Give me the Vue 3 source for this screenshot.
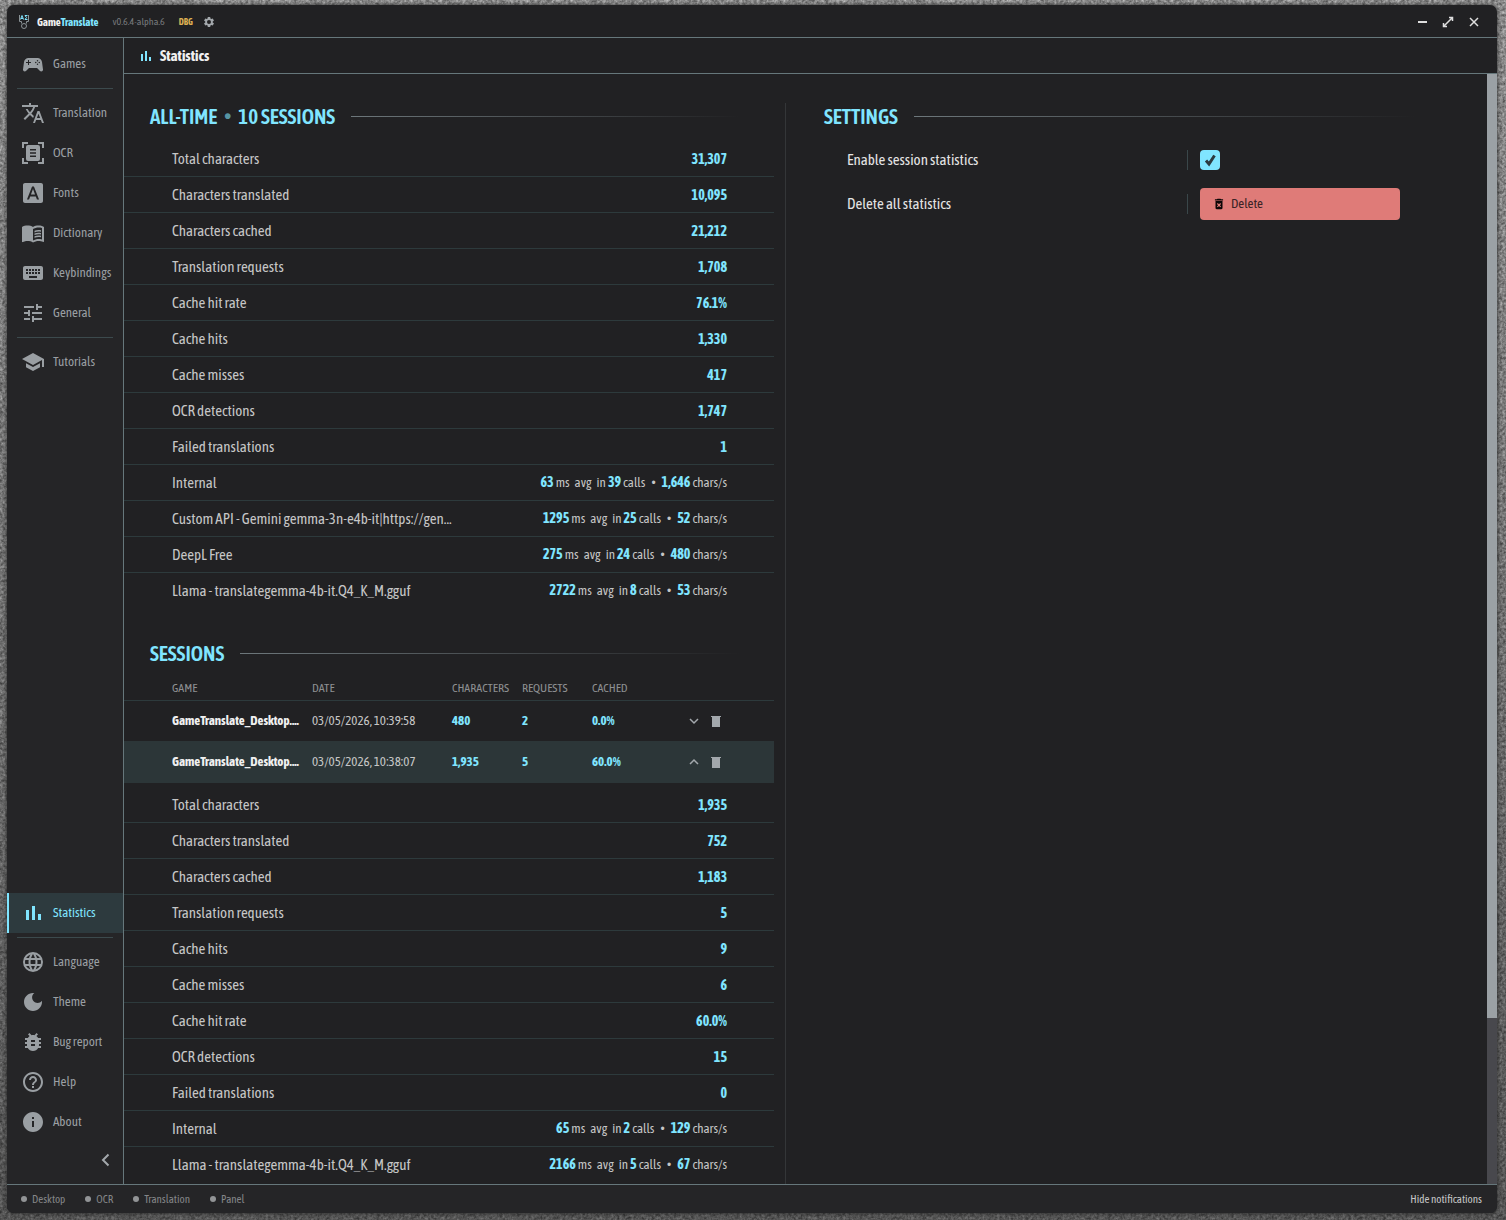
<script setup>
import { ref } from 'vue'

const icons = {
  games: 'M7.97 16 5 19c-.33.3-.77.5-1.25.5A1.75 1.75 0 0 1 2 17.75v-.25l1-7.38C3.21 7.81 5.14 6 7.5 6h9c2.36 0 4.29 1.81 4.5 4.12l1 7.38v.25a1.75 1.75 0 0 1-1.75 1.75c-.48 0-.92-.2-1.25-.5l-2.97-3H7.97M7 8v2H5v1h2v2h1v-2h2v-1H8V8H7m9.5 0a.75.75 0 1 0 0 1.5.75.75 0 0 0 0-1.5m-1.75 1.75a.75.75 0 1 0 0 1.5.75.75 0 0 0 0-1.5m3.5 0a.75.75 0 1 0 0 1.5.75.75 0 0 0 0-1.5M16.5 11.5a.75.75 0 1 0 0 1.5.75.75 0 0 0 0-1.5z',
  translation: 'M12.87 15.07l-2.54-2.51.03-.03C12.1 10.59 13.34 8.36 14.07 6H17V4h-7V2H8v2H1v2h11.17C11.5 7.92 10.44 9.75 9 11.35 8.07 10.32 7.3 9.19 6.69 8h-2c.73 1.63 1.73 3.17 2.98 4.56L2.58 17.58 4 19l5-5 3.11 3.11.76-2.04M18.5 10h-2L12 22h2l1.12-3h4.75L21 22h2l-4.5-12m-2.62 7 1.62-4.33L19.12 17h-3.24z',
  ocr: 'M1 1h6v2H3v4H1V1zm16 0h6v6h-2V3h-4V1zM1 17h2v4h4v2H1v-6zm20 0h2v6h-6v-2h4v-4zM7 4h10a2 2 0 0 1 2 2v12a2 2 0 0 1-2 2H7a2 2 0 0 1-2-2V6a2 2 0 0 1 2-2zm2 4v1.5h6V8H9zm0 3.25v1.5h6v-1.5H9zm0 3.25V16h6v-1.5H9z',
  fonts: 'M9.93 13.5h4.14L12 7.98zM20 2H4c-1.1 0-2 .9-2 2v16c0 1.1.9 2 2 2h16c1.1 0 2-.9 2-2V4c0-1.1-.9-2-2-2zm-4.05 16.5-1.14-3H9.17l-1.12 3H5.96l5.11-13h1.86l5.11 13h-2.09z',
  dictionary: 'M21 5c-1.11-.35-2.33-.5-3.5-.5-1.95 0-4.05.4-5.5 1.5-1.45-1.1-3.55-1.5-5.5-1.5S2.45 4.9 1 6v14.65c0 .25.25.5.5.5.1 0 .15-.05.25-.05C3.1 20.45 5.05 20 6.5 20c1.95 0 4.05.4 5.5 1.5 1.35-.85 3.8-1.5 5.5-1.5 1.65 0 3.35.3 4.75 1.05.1.05.15.05.25.05.25 0 .5-.25.5-.5V6c-.6-.45-1.25-.75-2-1zm0 13.5c-1.1-.35-2.3-.5-3.5-.5-1.7 0-4.15.65-5.5 1.5V8c1.35-.85 3.8-1.5 5.5-1.5 1.2 0 2.4.15 3.5.5v11.5zM13.5 9.8c1.8-.8 4.2-1 6.5-.5v1.5c-2.3-.5-4.7-.2-6.5.6zm0 2.7c1.8-.8 4.2-1 6.5-.5v1.5c-2.3-.5-4.7-.2-6.5.6zm0 2.7c1.8-.8 4.2-1 6.5-.5v1.5c-2.3-.5-4.7-.2-6.5.6z',
  keybindings: 'M20 5H4c-1.1 0-2 .9-2 2v10c0 1.1.9 2 2 2h16c1.1 0 2-.9 2-2V7c0-1.1-.9-2-2-2zm-9 3h2v2h-2V8zm0 3h2v2h-2v-2zM8 8h2v2H8V8zm0 3h2v2H8v-2zm-1 2H5v-2h2v2zm0-3H5V8h2v2zm9 7H8v-2h8v2zm0-4h-2v-2h2v2zm0-3h-2V8h2v2zm3 3h-2v-2h2v2zm0-3h-2V8h2v2z',
  general: 'M3 17v2h6v-2H3zM3 5v2h10V5H3zm10 16v-2h8v-2h-8v-2h-2v6h2zM7 9v2H3v2h4v2h2V9H7zm14 4v-2H11v2h10zm-6-4h2V7h4V5h-4V3h-2v6z',
  tutorials: 'M5 13.18v4L12 21l7-3.82v-4L12 17l-7-3.82zM12 3 1 9l11 6 9-4.91V17h2V9L12 3z',
  statistics: 'M5 9h3v10H5zM11 5h3v14h-3zM17 13h3v6h-3z',
  language: 'M12 2a10 10 0 1 0 0 20 10 10 0 0 0 0-20zm6.93 6h-2.95a15.65 15.65 0 0 0-1.38-3.56A8.03 8.03 0 0 1 18.93 8zM12 4.04c.83 1.2 1.48 2.53 1.91 3.96h-3.82c.43-1.43 1.08-2.76 1.91-3.96zM4.26 14a8.2 8.2 0 0 1 0-4h3.38a16.5 16.5 0 0 0 0 4H4.26zm.82 2h2.95c.32 1.25.78 2.45 1.38 3.56A7.99 7.99 0 0 1 5.08 16zm2.95-8H5.08a7.99 7.99 0 0 1 4.33-3.56A15.65 15.65 0 0 0 8.03 8zM12 19.96A14 14 0 0 1 10.09 16h3.82A14 14 0 0 1 12 19.96zM14.34 14H9.66a14.7 14.7 0 0 1 0-4h4.68a14.6 14.6 0 0 1 0 4zm.25 5.56c.6-1.11 1.06-2.31 1.38-3.56h2.95a8.03 8.03 0 0 1-4.33 3.56zM16.36 14a16.5 16.5 0 0 0 0-4h3.38a8.2 8.2 0 0 1 0 4h-3.38z',
  theme: 'M12 3c-4.97 0-9 4.03-9 9s4.03 9 9 9 9-4.03 9-9c0-.46-.04-.92-.1-1.36-.98 1.37-2.58 2.26-4.4 2.26-2.98 0-5.4-2.42-5.4-5.4 0-1.81.89-3.42 2.26-4.4C12.92 3.04 12.46 3 12 3z',
  bug: 'M20 8h-2.81c-.45-.78-1.07-1.45-1.82-1.96L17 4.41 15.59 3l-2.17 2.17C12.96 5.06 12.49 5 12 5s-.96.06-1.41.17L8.41 3 7 4.41l1.62 1.63C7.88 6.55 7.26 7.22 6.81 8H4v2h2.09c-.05.33-.09.66-.09 1v1H4v2h2v1c0 .34.04.67.09 1H4v2h2.81c1.04 1.79 2.97 3 5.19 3s4.15-1.21 5.19-3H20v-2h-2.09c.05-.33.09-.66.09-1v-1h2v-2h-2v-1c0-.34-.04-.67-.09-1H20V8zm-6 8h-4v-2h4v2zm0-4h-4v-2h4v2z',
  help: 'M11 18h2v-2h-2v2zm1-16C6.48 2 2 6.48 2 12s4.48 10 10 10 10-4.48 10-10S17.52 2 12 2zm0 18c-4.41 0-8-3.59-8-8s3.59-8 8-8 8 3.59 8 8-3.59 8-8 8zm0-14c-2.21 0-4 1.79-4 4h2c0-1.1.9-2 2-2s2 .9 2 2c0 2-3 1.75-3 5h2c0-2.25 3-2.5 3-5 0-2.21-1.79-4-4-4z',
  about: 'M12 2C6.48 2 2 6.48 2 12s4.48 10 10 10 10-4.48 10-10S17.52 2 12 2zm1 15h-2v-6h2v6zm0-8h-2V7h2v2z',
  gear: 'M19.43 12.98c.04-.32.07-.64.07-.98s-.03-.66-.07-.98l2.11-1.65c.19-.15.24-.42.12-.64l-2-3.46c-.12-.22-.39-.3-.61-.22l-2.49 1c-.52-.4-1.08-.73-1.69-.98l-.38-2.65C14.46 2.18 14.25 2 14 2h-4c-.25 0-.46.18-.49.42l-.38 2.65c-.61.25-1.17.59-1.69.98l-2.49-1c-.23-.09-.49 0-.61.22l-2 3.46c-.13.22-.07.49.12.64l2.11 1.65c-.04.32-.07.65-.07.98s.03.66.07.98l-2.11 1.65c-.19.15-.24.42-.12.64l2 3.46c.12.22.39.3.61.22l2.49-1c.52.4 1.08.73 1.69.98l.38 2.65c.03.24.24.42.49.42h4c.25 0 .46-.18.49-.42l.38-2.65c.61-.25 1.17-.59 1.69-.98l2.49 1c.23.09.49 0 .61-.22l2-3.46c.12-.22.07-.49-.12-.64l-2.11-1.65zM12 16a4 4 0 1 1 0-8 4 4 0 0 1 0 8z',
  deleteForever: 'M6 19c0 1.1.9 2 2 2h8c1.1 0 2-.9 2-2V7H6v12zm2.46-7.12 1.41-1.41L12 12.59l2.12-2.12 1.41 1.41L13.41 14l2.12 2.12-1.41 1.41L12 15.41l-2.12 2.12-1.41-1.41L10.59 14l-2.13-2.12zM15.5 4l-1-1h-5l-1 1H5v2h14V4z'
}

const navGroups = [
  [{ id: 'games', label: 'Games' }],
  [
    { id: 'translation', label: 'Translation' },
    { id: 'ocr', label: 'OCR' },
    { id: 'fonts', label: 'Fonts' },
    { id: 'dictionary', label: 'Dictionary' },
    { id: 'keybindings', label: 'Keybindings' },
    { id: 'general', label: 'General' }
  ],
  [{ id: 'tutorials', label: 'Tutorials' }],
  [{ id: 'statistics', label: 'Statistics' }],
  [
    { id: 'language', label: 'Language' },
    { id: 'theme', label: 'Theme' },
    { id: 'bug', label: 'Bug report' },
    { id: 'help', label: 'Help' },
    { id: 'about', label: 'About' }
  ]
]

const allTime = [
  { label: 'Total characters', value: '31,307' },
  { label: 'Characters translated', value: '10,095' },
  { label: 'Characters cached', value: '21,212' },
  { label: 'Translation requests', value: '1,708' },
  { label: 'Cache hit rate', value: '76.1%' },
  { label: 'Cache hits', value: '1,330' },
  { label: 'Cache misses', value: '417' },
  { label: 'OCR detections', value: '1,747' },
  { label: 'Failed translations', value: '1' },
  { label: 'Internal', ms: '63', calls: '39', speed: '1,646' },
  { label: 'Custom API - Gemini gemma-3n-e4b-it|https://gen...', ms: '1295', calls: '25', speed: '52' },
  { label: 'DeepL Free', ms: '275', calls: '24', speed: '480' },
  { label: 'Llama - translategemma-4b-it.Q4_K_M.gguf', ms: '2722', calls: '8', speed: '53' }
]

const sessionDetail = [
  { label: 'Total characters', value: '1,935' },
  { label: 'Characters translated', value: '752' },
  { label: 'Characters cached', value: '1,183' },
  { label: 'Translation requests', value: '5' },
  { label: 'Cache hits', value: '9' },
  { label: 'Cache misses', value: '6' },
  { label: 'Cache hit rate', value: '60.0%' },
  { label: 'OCR detections', value: '15' },
  { label: 'Failed translations', value: '0' },
  { label: 'Internal', ms: '65', calls: '2', speed: '129' },
  { label: 'Llama - translategemma-4b-it.Q4_K_M.gguf', ms: '2166', calls: '5', speed: '67' }
]

const sessions = [
  { game: 'GameTranslate_Desktop....', date: '03/05/2026, 10:39:58', chars: '480', requests: '2', cached: '0.0%' },
  { game: 'GameTranslate_Desktop....', date: '03/05/2026, 10:38:07', chars: '1,935', requests: '5', cached: '60.0%' }
]

const blocks = [
  { id: 'all', rows: allTime },
  { id: 'detail', rows: sessionDetail }
]

const statuses = ['Desktop', 'OCR', 'Translation', 'Panel']
const enabled = ref(true)
</script>

<template>
  <div class="desktop">
    <svg class="texture" aria-hidden="true">
      <filter id="grain" x="0" y="0" width="100%" height="100%" color-interpolation-filters="sRGB">
        <feTurbulence type="fractalNoise" baseFrequency="0.35" numOctaves="4" seed="4" />
        <feColorMatrix values="0.6 0 0 0 0.25  0.6 0 0 0 0.25  0.6 0 0 0 0.25  0 0 0 0 1" />
      </filter>
      <rect width="100%" height="100%" filter="url(#grain)" />
    </svg>

    <div class="window">
      <header class="titlebar">
        <svg class="logo" viewBox="0 0 12 16" aria-hidden="true">
          <path class="logo-frame" d="M1.500 1v6.500h2M10.500 1v6.500h-2M3.500 7.500v2M8.500 7.500v2" />
          <path class="logo-mark" d="M2.500 5.500 4 1.500l1.500 4M3 4.500h2M9.500 1.500H7L8.500 3.500 7 5.500h2.500" />
          <circle class="logo-frame" cx="6" cy="12" r="2.500" />
        </svg>
        <strong class="brand">Game<span>Translate</span></strong>
        <span class="version">v0.6.4-alpha.6</span>
        <span class="debug">DBG</span>
        <button class="icon-button" aria-label="Settings">
          <svg class="icon-12" viewBox="0 0 24 24"><path fill-rule="evenodd" :d="icons.gear" /></svg>
        </button>
        <div class="window-controls">
          <button class="icon-button" aria-label="Minimize">
            <svg class="icon-12" viewBox="0 0 12 12"><path d="M2 5h9v2H2z" /></svg>
          </button>
          <button class="icon-button" aria-label="Maximize">
            <svg class="icon-12 thin" viewBox="0 0 12 12"><path d="M1.500 10.500l9-9M7 1.500h3.500V5M1.500 7v3.500H5" /></svg>
          </button>
          <button class="icon-button" aria-label="Close">
            <svg class="icon-12 thin" viewBox="0 0 12 12"><path d="M2 2l8 8M10 2l-8 8" /></svg>
          </button>
        </div>
      </header>

      <div class="body">
        <nav class="sidebar">
          <div
            v-for="(group, i) in navGroups"
            :key="i"
            class="nav-group"
            :class="{ pushed: i === 3 }"
          >
            <a
              v-for="item in group"
              :key="item.id"
              class="nav-item"
              :class="{ active: item.id === 'statistics' }"
              :href="'#' + item.id"
            >
              <svg class="nav-icon" viewBox="0 0 24 24" aria-hidden="true">
                <path fill-rule="evenodd" :d="icons[item.id]" />
              </svg>
              <span>{{ item.label }}</span>
            </a>
          </div>
          <button class="icon-button collapse" aria-label="Collapse sidebar">
            <svg viewBox="0 0 16 16"><path d="M11.500 2.500 6 8l5.500 5.500" /></svg>
          </button>
        </nav>

        <div class="page">
          <div class="page-header">
            <svg class="icon-14" viewBox="0 0 14 14" aria-hidden="true"><path d="M2 5h2v7H2zM6 2h2v10H6zM10 8h2v4h-2z" /></svg>
            <h1>Statistics</h1>
          </div>

          <div class="page-view">
            <main class="content">
              <div class="column stats">
                <section v-for="block in blocks" :key="block.id" class="block">
                  <h2 v-if="block.id === 'all'">ALL-TIME <i>•</i> 10 SESSIONS</h2>
                  <h2 v-else>SESSIONS</h2>

                  <table v-if="block.id === 'detail'" class="sessions">
                    <colgroup>
                      <col class="col-game" /><col class="col-date" /><col class="col-number" />
                      <col class="col-number" /><col class="col-number" /><col />
                    </colgroup>
                    <thead>
                      <tr>
                        <th>GAME</th><th>DATE</th><th>CHARACTERS</th><th>REQUESTS</th><th>CACHED</th><th></th>
                      </tr>
                    </thead>
                    <tbody>
                      <tr v-for="(s, i) in sessions" :key="s.date" :class="{ open: i === 1 }">
                        <td class="game">{{ s.game }}</td>
                        <td>{{ s.date }}</td>
                        <td><b>{{ s.chars }}</b></td>
                        <td><b>{{ s.requests }}</b></td>
                        <td><b>{{ s.cached }}</b></td>
                        <td>
                          <div class="row-actions">
                            <button class="icon-button" :aria-label="i === 1 ? 'Collapse' : 'Expand'">
                              <svg class="icon-12 thin" viewBox="0 0 12 12">
                                <path :d="i === 1 ? 'M2 8l4-4 4 4' : 'M2 4l4 4 4-4'" />
                              </svg>
                            </button>
                            <button class="icon-button" aria-label="Delete session">
                              <svg class="icon-14" viewBox="0 0 14 14"><path d="M2 2h10v1H2zM3 3h8v10H3z" /></svg>
                            </button>
                          </div>
                        </td>
                      </tr>
                    </tbody>
                  </table>

                  <table class="figures">
                    <tbody>
                      <tr v-for="row in block.rows" :key="row.label">
                        <th scope="row">{{ row.label }}</th>
                        <td v-if="row.value"><b>{{ row.value }}</b></td>
                        <td v-else>
                          <div class="rate">
                            <b>{{ row.ms }}</b><span>ms</span><span class="word">avg</span><span class="word">in</span>
                            <b>{{ row.calls }}</b><span>calls</span><i>•</i>
                            <b>{{ row.speed }}</b><span>chars/s</span>
                          </div>
                        </td>
                      </tr>
                    </tbody>
                  </table>
                </section>
              </div>

              <section class="column settings">
                <h2>SETTINGS</h2>
                <div class="setting">
                  <label for="enable-stats">Enable session statistics</label>
                  <div class="control">
                    <input id="enable-stats" v-model="enabled" type="checkbox" />
                    <svg class="tick" viewBox="0 0 20 20" aria-hidden="true"><path d="M6 10.500l3 3.500 5.500-8.500" /></svg>
                  </div>
                </div>
                <div class="setting">
                  <span>Delete all statistics</span>
                  <div class="control">
                    <button class="delete">
                      <svg class="icon-14" viewBox="0 0 24 24" aria-hidden="true"><path fill-rule="evenodd" :d="icons.deleteForever" /></svg>
                      Delete
                    </button>
                  </div>
                </div>
              </section>
            </main>
            <div class="scroll-track"><div class="scroll-thumb"></div></div>
          </div>
        </div>
      </div>

      <footer class="statusbar">
        <span v-for="s in statuses" :key="s" class="status">{{ s }}</span>
        <button class="text-button">Hide notifications</button>
      </footer>
    </div>
  </div>
</template>

<style>
html,
body {
  margin: 0;
  background: #6c6c6c;
}
</style>

<style scoped>
.desktop {
  --accent: #80e5ff;
  --rule: #66777b;
  --faint: #2d3a3c;
  --muted: #9a9fa3;
  position: relative;
  box-sizing: border-box;
  height: 100vh;
  padding: 5px 9px 7px 7px;
  overflow: hidden;
  color: #c6c6c6;
  font-family: "Asap Condensed", "Liberation Sans Narrow", "Open Sans Condensed", "Roboto Condensed", "Liberation Sans", sans-serif;
  font-size: 15px;
  line-height: 20px;
}

.texture {
  position: absolute;
  inset: 0;
  width: 100%;
  height: 100%;
}

.desktop::before {
  content: "";
  position: absolute;
  inset: 0;
  z-index: 1;
  background: linear-gradient(rgba(0, 0, 0, 0), rgba(0, 0, 0, 0.4));
}

.window {
  position: relative;
  z-index: 2;
  display: flex;
  flex-direction: column;
  height: 100%;
  overflow: hidden;
  border-radius: 7px;
  background: #212123;
  box-shadow: 0 0 4px #222;
}

svg {
  display: block;
  flex: none;
  fill: currentColor;
}

button {
  font: inherit;
  color: inherit;
}

.icon-button {
  display: flex;
  padding: 0;
  border: 0;
  background: none;
  color: #a3a8ac;
}

.icon-12 {
  width: 12px;
  height: 12px;
}

.icon-14 {
  width: 14px;
  height: 14px;
}

.thin {
  fill: none;
  stroke: currentColor;
  stroke-width: 1.5;
}

.titlebar {
  display: flex;
  flex: none;
  align-items: center;
  height: 31px;
  padding: 1px 17px 0 11px;
  border-bottom: 1px solid var(--rule);
  font-size: 11px;
}

.logo {
  width: 12px;
  height: 16px;
  margin-right: 7px;
  fill: none;
}

.logo-frame {
  fill: none;
  stroke: #8b9396;
}

.logo-mark {
  stroke: var(--accent);
}

.brand {
  color: #f0f0f0;
}

.brand span {
  color: var(--accent);
}

.version {
  margin-left: 14px;
  color: #77797b;
  font-size: 10px;
}

.debug {
  margin: 0 10px 0 14px;
  color: #dcb054;
  font-size: 9px;
  font-weight: bold;
}

.window-controls {
  display: flex;
  gap: 14px;
  margin-left: auto;
}

.window-controls .icon-button {
  color: #dedede;
}

.body {
  display: flex;
  flex: 1;
  min-height: 0;
}

.sidebar {
  display: flex;
  flex: none;
  flex-direction: column;
  width: 116px;
  padding-top: 6px;
  border-right: 1px solid var(--rule);
  background: #252527;
}

.nav-group + .nav-group::before {
  content: "";
  display: block;
  height: 1px;
  margin: 4px 10px;
  background: #3c4a4d;
}

.nav-group.pushed {
  margin-top: auto;
}

.nav-group.pushed::before {
  display: none;
}

.nav-item {
  display: flex;
  gap: 8px;
  align-items: center;
  height: 40px;
  padding-left: 14px;
  color: var(--muted);
  font-size: 13px;
  text-decoration: none;
  white-space: nowrap;
}

.nav-item.active {
  background: #2d3a3e;
  box-shadow: inset 2px 0 var(--accent);
  color: var(--accent);
}

.nav-icon {
  width: 24px;
  height: 24px;
}

.collapse {
  align-self: flex-end;
  align-items: center;
  height: 36px;
  margin: 0 10px 6px 0;
}

.collapse svg {
  width: 16px;
  height: 16px;
  fill: none;
  stroke: currentColor;
  stroke-width: 2;
}

.page {
  display: flex;
  flex: 1;
  flex-direction: column;
  min-width: 0;
}

.page-header {
  display: flex;
  flex: none;
  gap: 7px;
  align-items: center;
  height: 35px;
  padding-left: 15px;
  border-bottom: 1px solid var(--rule);
}

.page-header svg {
  color: var(--accent);
}

h1 {
  margin: 0;
  color: #f0f0f0;
  font-size: 15px;
}

.page-view {
  display: flex;
  flex: 1;
  min-height: 0;
}

.content {
  display: grid;
  flex: 1;
  grid-template-columns: 662fr 701fr;
  align-items: stretch;
  min-width: 0;
  padding-top: 29px;
  overflow-y: auto;
  scrollbar-width: none;
}

.column {
  min-width: 0;
}

.stats {
  padding: 0 11px 120px 0;
  border-right: 1px solid #343638;
}

h2 {
  display: flex;
  gap: 7px;
  align-items: center;
  height: 26px;
  margin: 0;
  color: var(--accent);
  font-size: 21px;
  font-weight: 600;
  white-space: nowrap;
}

i {
  font-family: "Liberation Sans", sans-serif;
  font-style: normal;
}

h2 i {
  color: #5795a3;
  font-size: 20px;
}

h2::after {
  content: "";
  flex: 1;
  height: 1px;
  margin-left: 9px;
  background: linear-gradient(90deg, #6d777b, transparent);
}

.stats h2 {
  margin: 0 34px 0 26px;
}

.block {
  margin-bottom: 31px;
}

table {
  width: 100%;
  border-collapse: separate;
  border-spacing: 0;
}

th,
td {
  padding: 0;
  text-align: left;
  white-space: nowrap;
}

th {
  font-weight: normal;
}

b {
  color: var(--accent);
}

.figures {
  margin-top: 12px;
}

.sessions + .figures {
  margin-top: 4px;
}

.figures th,
.figures td {
  height: 35px;
  border-bottom: 1px solid var(--faint);
}

.figures tr:last-child > * {
  border-color: transparent;
}

.figures th {
  padding-left: 48px;
}

.figures td {
  padding-right: 47px;
  font-size: 14px;
  text-align: right;
}

.rate {
  display: flex;
  gap: 2px;
  align-items: baseline;
  justify-content: flex-end;
}

.rate span {
  font-size: 13px;
}

.rate .word {
  margin-left: 3px;
}

.rate i {
  margin: 0 4px;
  font-size: 12px;
}

.sessions {
  margin-top: 10px;
  table-layout: fixed;
  font-size: 13px;
}

.sessions th,
.sessions td {
  height: 40px;
  border-bottom: 1px solid transparent;
}

.sessions thead th {
  height: 24px;
  border-color: var(--faint);
  color: #8d8f91;
  font-size: 12px;
}

.sessions th:first-child,
.sessions td:first-child {
  padding-left: 48px;
}

.sessions .game {
  color: #f0f0f0;
  font-weight: bold;
}

.sessions tr:has(+ .open) td {
  border-color: #2c3638;
}

.sessions .open td {
  border-color: #2c3638;
  background: #2c3638;
}

.col-game {
  width: 188px;
}

.col-date {
  width: 140px;
}

.col-number {
  width: 70px;
}

.row-actions {
  display: flex;
  gap: 9px;
  align-items: center;
  justify-content: flex-end;
  padding-right: 51px;
}

.settings {
  padding: 0 72px 0 38px;
  color: #e4e4e4;
}

.setting {
  display: flex;
  align-items: center;
  justify-content: space-between;
  height: 44px;
  padding: 0 15px 0 23px;
}

.settings h2 {
  margin-bottom: 9px;
}

.control {
  position: relative;
  display: flex;
  align-items: center;
  width: 200px;
}

.control::before {
  content: "";
  position: absolute;
  left: -13px;
  width: 1px;
  height: 20px;
  background: #3a474a;
}

.control input {
  width: 20px;
  height: 20px;
  margin: 0;
  border-radius: 4px;
  appearance: none;
  background: #4a4a4e;
}

.control input:checked {
  background: var(--accent);
}

.tick {
  position: absolute;
  left: 0;
  width: 20px;
  height: 20px;
  fill: none;
  stroke: #2b3a40;
  stroke-width: 3;
  pointer-events: none;
}

.control input:not(:checked) + .tick {
  display: none;
}

.delete {
  display: flex;
  gap: 5px;
  align-items: center;
  width: 100%;
  height: 32px;
  padding: 0 12px;
  border: 0;
  border-radius: 4px;
  background: #df7b78;
  color: #3a2426;
  font-size: 13px;
}

.delete svg {
  color: #0c0606;
}

.scroll-track {
  flex: none;
  width: 10px;
  background: #48484d;
}

.scroll-thumb {
  height: 85%;
  background: #9ba1a5;
}

.statusbar {
  display: flex;
  flex: none;
  gap: 20px;
  align-items: center;
  height: 28px;
  padding: 0 15px 0 14px;
  border-top: 1px solid var(--rule);
  background: #252527;
  color: #848688;
  font-size: 11px;
}

.status {
  display: flex;
  gap: 5px;
  align-items: center;
}

.status::before {
  content: "";
  width: 6px;
  height: 6px;
  border-radius: 50%;
  background: #929496;
}

.text-button {
  margin-left: auto;
  padding: 0;
  border: 0;
  background: none;
  color: #c6c6c6;
}
</style>
